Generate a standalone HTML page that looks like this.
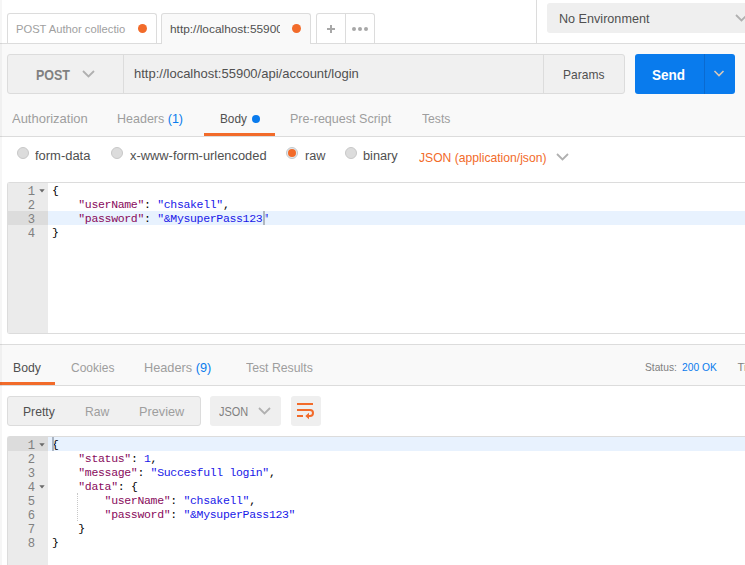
<!DOCTYPE html>
<html><head><meta charset="utf-8"><style>
html,body{margin:0;padding:0;width:745px;height:565px;overflow:hidden;background:#fff;}
body{position:relative;font-family:"Liberation Sans", sans-serif;}
.t{position:absolute;white-space:nowrap;}
.r{position:absolute;}
</style></head><body>
<div class="r" style="left:0px;top:0px;width:745px;height:43px;background:#ffffff;"></div>
<div class="r" style="left:0px;top:43px;width:745px;height:1px;background:#dcdcdc;"></div>
<div class="r" style="left:0px;top:44px;width:745px;height:93px;background:#f9f9f9;"></div>
<div class="r" style="left:7px;top:13px;width:150px;height:30px;background:#ffffff;border:1px solid #dcdcdc;box-sizing:border-box;border-radius:3px;border-bottom:none;border-bottom-left-radius:0;border-bottom-right-radius:0;"></div>
<div class="t" style="left:16.2px;top:19.19px;font-size:11px;line-height:20px;color:#a0a0a0;font-weight:400;transform:scaleX(1.017);transform-origin:0 0;">POST Author collectio</div>
<div class="r" style="left:137.5px;top:24px;width:9px;height:9px;background:#f26b2a;border-radius:5px;"></div>
<div class="r" style="left:161px;top:13px;width:150px;height:31px;background:#f9f9f9;border:1px solid #dcdcdc;box-sizing:border-box;border-radius:3px;border-bottom:none;border-bottom-left-radius:0;border-bottom-right-radius:0;"></div>
<div class="r" style="left:165px;top:18px;width:115px;height:20px;overflow:hidden"><div class="t" style="left:5.3px;top:1.19px;font-size:11px;line-height:20px;color:#505050;font-weight:400;transform:scaleX(1.08);transform-origin:0 0;">http://localhost:55900</div>
</div>
<div class="r" style="left:291.5px;top:24px;width:9px;height:9px;background:#f26b2a;border-radius:5px;"></div>
<div class="r" style="left:316px;top:13px;width:59px;height:30px;background:#ffffff;border:1px solid #dcdcdc;box-sizing:border-box;border-radius:3px;border-bottom:none;border-bottom-left-radius:0;border-bottom-right-radius:0;"></div>
<div class="r" style="left:345px;top:14px;width:1px;height:29px;background:#dcdcdc;"></div>
<div class="r" style="left:327px;top:28px;width:8px;height:2px;background:#a8a8a8;"></div>
<div class="r" style="left:330px;top:25px;width:2px;height:8px;background:#a8a8a8;"></div>
<div class="r" style="left:352px;top:27px;width:4px;height:4px;background:#a8a8a8;border-radius:2px;"></div>
<div class="r" style="left:358px;top:27px;width:4px;height:4px;background:#a8a8a8;border-radius:2px;"></div>
<div class="r" style="left:364px;top:27px;width:4px;height:4px;background:#a8a8a8;border-radius:2px;"></div>
<div class="r" style="left:536px;top:0px;width:1px;height:43px;background:#dcdcdc;"></div>
<div class="r" style="left:547px;top:3px;width:210px;height:30px;background:#efefef;border-radius:3px;"></div>
<div class="t" style="left:558.8px;top:9.00px;font-size:13px;line-height:20px;color:#505050;font-weight:400;transform:scaleX(0.97);transform-origin:0 0;">No Environment</div>
<svg class="r" style="left:735px;top:14px" width="13" height="8"><path d="M1 1 L6.5 6.5 L12 1" stroke="#b0b0b0" stroke-width="1.8" fill="none"/></svg>
<div class="r" style="left:7px;top:54px;width:618px;height:40px;background:#f0f0f0;border:1px solid #dcdcdc;box-sizing:border-box;border-radius:3px;"></div>
<div class="r" style="left:123px;top:55px;width:1px;height:38px;background:#dcdcdc;"></div>
<div class="r" style="left:543px;top:55px;width:1px;height:38px;background:#dcdcdc;"></div>
<div class="t" style="left:36.2px;top:64.95px;font-size:14px;line-height:20px;color:#808080;font-weight:700;transform:scaleX(0.8909);transform-origin:0 0;">POST</div>
<svg class="r" style="left:82px;top:70px" width="13" height="8"><path d="M1 1 L6.5 6.5 L12 1" stroke="#b0b0b0" stroke-width="1.8" fill="none"/></svg>
<div class="t" style="left:134.4px;top:63.60px;font-size:13px;line-height:20px;color:#505050;font-weight:400;transform:scaleX(1.0001);transform-origin:0 0;">http://localhost:55900/api/account/login</div>
<div class="t" style="left:563.4px;top:64.50px;font-size:13px;line-height:20px;color:#505050;font-weight:400;transform:scaleX(0.9251);transform-origin:0 0;">Params</div>
<div class="r" style="left:635px;top:54px;width:100px;height:40px;background:#097bed;border-radius:3px;"></div>
<div class="r" style="left:704px;top:54px;width:1px;height:40px;background:#0a6ad0;"></div>
<div class="t" style="left:652.2px;top:64.80px;font-size:15px;line-height:20px;color:#ffffff;font-weight:700;transform:scaleX(0.9009);transform-origin:0 0;">Send</div>
<svg class="r" style="left:713px;top:70px" width="12" height="8"><path d="M1.5 1 L6 5.5 L10.5 1" stroke="#d8c8b8" stroke-width="1.6" fill="none"/></svg>
<div class="r" style="left:0px;top:94px;width:745px;height:42px;background:#f9f9f9;"></div>
<div class="r" style="left:0px;top:136px;width:745px;height:1px;background:#dcdcdc;"></div>
<div class="t" style="left:12.0px;top:109.30px;font-size:13px;line-height:20px;color:#9e9e9e;font-weight:400;transform:scaleX(0.9976);transform-origin:0 0;">Authorization</div>
<div class="t" style="left:117.0px;top:109.30px;font-size:13px;line-height:20px;color:#9e9e9e;font-weight:400;transform:scaleX(0.9615);transform-origin:0 0;">Headers <span style='color:#097bed'>(1)</span></div>
<div class="t" style="left:219.8px;top:109.30px;font-size:13px;line-height:20px;color:#505050;font-weight:400;transform:scaleX(0.9071);transform-origin:0 0;">Body</div>
<div class="r" style="left:252px;top:115px;width:8px;height:8px;background:#097bed;border-radius:4px;"></div>
<div class="r" style="left:204px;top:133px;width:71px;height:3px;background:#f26b2a;"></div>
<div class="t" style="left:289.8px;top:109.30px;font-size:13px;line-height:20px;color:#9e9e9e;font-weight:400;transform:scaleX(0.9652);transform-origin:0 0;">Pre-request Script</div>
<div class="t" style="left:421.6px;top:109.30px;font-size:13px;line-height:20px;color:#9e9e9e;font-weight:400;transform:scaleX(0.9351);transform-origin:0 0;">Tests</div>
<div class="r" style="left:0px;top:137px;width:745px;height:45px;background:#ffffff;"></div>
<div class="r" style="left:17px;top:147px;width:12px;height:12px;background:#dcdcdc;border:1px solid #c8c8c8;box-sizing:border-box;border-radius:6px;"></div>
<div class="t" style="left:35.0px;top:146.14px;font-size:12px;line-height:20px;color:#505050;font-weight:400;transform:scaleX(1.0791);transform-origin:0 0;">form-data</div>
<div class="r" style="left:111px;top:147px;width:12px;height:12px;background:#dcdcdc;border:1px solid #c8c8c8;box-sizing:border-box;border-radius:6px;"></div>
<div class="t" style="left:129.5px;top:146.14px;font-size:12px;line-height:20px;color:#505050;font-weight:400;transform:scaleX(1.0722);transform-origin:0 0;">x-www-form-urlencoded</div>
<div class="r" style="left:286px;top:147px;width:12px;height:12px;background:#e4eaee;border:1px solid #c4c8ca;box-sizing:border-box;border-radius:6px;"></div>
<div class="r" style="left:288px;top:149px;width:8px;height:8px;background:#f26b2a;border-radius:4px;"></div>
<div class="t" style="left:304.5px;top:146.14px;font-size:12px;line-height:20px;color:#505050;font-weight:400;transform:scaleX(1.0565);transform-origin:0 0;">raw</div>
<div class="r" style="left:345px;top:147px;width:12px;height:12px;background:#dcdcdc;border:1px solid #c8c8c8;box-sizing:border-box;border-radius:6px;"></div>
<div class="t" style="left:363.0px;top:146.14px;font-size:12px;line-height:20px;color:#505050;font-weight:400;transform:scaleX(1.0633);transform-origin:0 0;">binary</div>
<div class="t" style="left:418.5px;top:147.50px;font-size:13px;line-height:20px;color:#f26b2a;font-weight:400;transform:scaleX(0.9334);transform-origin:0 0;">JSON (application/json)</div>
<svg class="r" style="left:556px;top:153px" width="13" height="8"><path d="M1 1 L6.5 6.5 L12 1" stroke="#b0b0b0" stroke-width="1.8" fill="none"/></svg>
<div class="r" style="left:7px;top:182px;width:738px;height:152px;background:#ffffff;border:1px solid #dcdcdc;box-sizing:border-box;border-radius:3px;border-right:none;border-top-right-radius:0;border-bottom-right-radius:0;"></div>
<div class="r" style="left:8px;top:183px;width:40px;height:150px;background:#ebebeb;"></div>
<div class="r" style="left:8px;top:211px;width:40px;height:14px;background:#dcdcdc;"></div>
<div class="r" style="left:48px;top:211px;width:697px;height:14px;background:#e8f2fe;"></div>
<div class="t" style="left:8px;width:27px;text-align:right;top:184.9px;font:12.2px/14px 'Liberation Mono', monospace;color:#808080">1</div>
<svg class="r" style="left:39px;top:188.5px" width="6" height="4"><path d="M0.3 0.3 L5.7 0.3 L3 3.6 Z" fill="#6a6a6a"/></svg>
<div class="t" style="left:52px;top:183.6px;font:11.5px/14px 'Liberation Mono', monospace;letter-spacing:-0.33px;color:#000000;white-space:pre">{</div>
<div class="t" style="left:8px;width:27px;text-align:right;top:198.9px;font:12.2px/14px 'Liberation Mono', monospace;color:#808080">2</div>
<div class="t" style="left:52px;top:197.6px;font:11.5px/14px 'Liberation Mono', monospace;letter-spacing:-0.33px;color:#000000;white-space:pre">    <span style="color:#880a5c">"userName"</span>: <span style="color:#1818e8">"chsakell"</span>,</div>
<div class="t" style="left:8px;width:27px;text-align:right;top:212.9px;font:12.2px/14px 'Liberation Mono', monospace;color:#808080">3</div>
<div class="t" style="left:52px;top:211.6px;font:11.5px/14px 'Liberation Mono', monospace;letter-spacing:-0.33px;color:#000000;white-space:pre">    <span style="color:#880a5c">"password"</span>: <span style="color:#1818e8">"&amp;MysuperPass123"</span></div>
<div class="t" style="left:8px;width:27px;text-align:right;top:226.9px;font:12.2px/14px 'Liberation Mono', monospace;color:#808080">4</div>
<div class="t" style="left:52px;top:225.6px;font:11.5px/14px 'Liberation Mono', monospace;letter-spacing:-0.33px;color:#000000;white-space:pre">}</div>
<div class="r" style="left:263px;top:211px;width:2px;height:14px;background:#b0b6c0;"></div>
<div class="r" style="left:0px;top:334px;width:745px;height:10px;background:#ffffff;"></div>
<div class="r" style="left:0px;top:344px;width:745px;height:1px;background:#dcdcdc;"></div>
<div class="r" style="left:0px;top:345px;width:745px;height:40px;background:#f9f9f9;"></div>
<div class="r" style="left:0px;top:385px;width:745px;height:1px;background:#dcdcdc;"></div>
<div class="r" style="left:0px;top:382px;width:55px;height:3px;background:#f26b2a;"></div>
<div class="t" style="left:12.5px;top:357.60px;font-size:13px;line-height:20px;color:#505050;font-weight:400;transform:scaleX(0.9405);transform-origin:0 0;">Body</div>
<div class="t" style="left:71.10000000000001px;top:357.60px;font-size:13px;line-height:20px;color:#9e9e9e;font-weight:400;transform:scaleX(0.9239);transform-origin:0 0;">Cookies</div>
<div class="t" style="left:144.1px;top:357.60px;font-size:13px;line-height:20px;color:#9e9e9e;font-weight:400;transform:scaleX(0.9796);transform-origin:0 0;">Headers <span style='color:#097bed'>(9)</span></div>
<div class="t" style="left:245.5px;top:357.60px;font-size:13px;line-height:20px;color:#9e9e9e;font-weight:400;transform:scaleX(0.9442);transform-origin:0 0;">Test Results</div>
<div class="t" style="left:645.0px;top:357.29px;font-size:11px;line-height:20px;color:#808080;font-weight:400;transform:scaleX(0.9305);transform-origin:0 0;">Status:</div>
<div class="t" style="left:682.0px;top:357.29px;font-size:11px;line-height:20px;color:#097bed;font-weight:400;transform:scaleX(0.9322);transform-origin:0 0;">200 OK</div>
<div class="t" style="left:737.6px;top:357.29px;font-size:11px;line-height:20px;color:#808080;font-weight:400;">Ti</div>
<div class="r" style="left:0px;top:386px;width:745px;height:179px;background:#ffffff;"></div>
<div class="r" style="left:7px;top:396px;width:194px;height:30px;background:#f0f0f0;border:1px solid #dcdcdc;box-sizing:border-box;border-radius:3px;"></div>
<div class="t" style="left:23.2px;top:401.50px;font-size:13px;line-height:20px;color:#505050;font-weight:400;transform:scaleX(0.9368);transform-origin:0 0;">Pretty</div>
<div class="t" style="left:85.2px;top:401.50px;font-size:13px;line-height:20px;color:#9e9e9e;font-weight:400;transform:scaleX(0.9336);transform-origin:0 0;">Raw</div>
<div class="t" style="left:139.0px;top:401.50px;font-size:13px;line-height:20px;color:#9e9e9e;font-weight:400;transform:scaleX(0.9778);transform-origin:0 0;">Preview</div>
<div class="r" style="left:210px;top:396px;width:71px;height:30px;background:#efefef;border-radius:3px;"></div>
<div class="t" style="left:219.0px;top:401.50px;font-size:13px;line-height:20px;color:#808080;font-weight:400;transform:scaleX(0.8424);transform-origin:0 0;">JSON</div>
<svg class="r" style="left:258px;top:407px" width="13" height="8"><path d="M1 1 L6.5 6.5 L12 1" stroke="#b0b0b0" stroke-width="1.8" fill="none"/></svg>
<div class="r" style="left:291px;top:396px;width:30px;height:30px;background:#efefef;border-radius:3px;"></div>
<svg class="r" style="left:291px;top:396px" width="30" height="30"><g stroke="#f26b2a" stroke-width="2" fill="none"><path d="M6 8 H22"/><path d="M6 14 H19 a3 3 0 0 1 0 6 H17"/><path d="M6 20 H12"/></g><path d="M14.3 20 L18 16.8 L18 23.2 Z" fill="#f26b2a"/></svg>
<div class="r" style="left:7px;top:436px;width:738px;height:129px;background:#ffffff;border:1px solid #dcdcdc;box-sizing:border-box;border-radius:3px;border-right:none;border-bottom:none;border-top-right-radius:0;border-bottom-left-radius:0;"></div>
<div class="r" style="left:8px;top:437px;width:40px;height:128px;background:#ebebeb;"></div>
<div class="r" style="left:8px;top:437px;width:40px;height:14px;background:#dcdcdc;"></div>
<div class="r" style="left:48px;top:437px;width:697px;height:14px;background:#e8f2fe;"></div>
<div class="t" style="left:8px;width:27px;text-align:right;top:438.9px;font:12.2px/14px 'Liberation Mono', monospace;color:#808080">1</div>
<svg class="r" style="left:39px;top:442.5px" width="6" height="4"><path d="M0.3 0.3 L5.7 0.3 L3 3.6 Z" fill="#6a6a6a"/></svg>
<div class="t" style="left:52px;top:437.6px;font:11.5px/14px 'Liberation Mono', monospace;letter-spacing:-0.33px;color:#000000;white-space:pre">{</div>
<div class="t" style="left:8px;width:27px;text-align:right;top:452.9px;font:12.2px/14px 'Liberation Mono', monospace;color:#808080">2</div>
<div class="t" style="left:52px;top:451.6px;font:11.5px/14px 'Liberation Mono', monospace;letter-spacing:-0.33px;color:#000000;white-space:pre">    <span style="color:#880a5c">"status"</span>: <span style="color:#1818e8">1</span>,</div>
<div class="t" style="left:8px;width:27px;text-align:right;top:466.9px;font:12.2px/14px 'Liberation Mono', monospace;color:#808080">3</div>
<div class="t" style="left:52px;top:465.6px;font:11.5px/14px 'Liberation Mono', monospace;letter-spacing:-0.33px;color:#000000;white-space:pre">    <span style="color:#880a5c">"message"</span>: <span style="color:#1818e8">"Succesfull login"</span>,</div>
<div class="t" style="left:8px;width:27px;text-align:right;top:480.9px;font:12.2px/14px 'Liberation Mono', monospace;color:#808080">4</div>
<svg class="r" style="left:39px;top:484.5px" width="6" height="4"><path d="M0.3 0.3 L5.7 0.3 L3 3.6 Z" fill="#6a6a6a"/></svg>
<div class="t" style="left:52px;top:479.6px;font:11.5px/14px 'Liberation Mono', monospace;letter-spacing:-0.33px;color:#000000;white-space:pre">    <span style="color:#880a5c">"data"</span>: {</div>
<div class="t" style="left:8px;width:27px;text-align:right;top:494.9px;font:12.2px/14px 'Liberation Mono', monospace;color:#808080">5</div>
<div class="t" style="left:52px;top:493.6px;font:11.5px/14px 'Liberation Mono', monospace;letter-spacing:-0.33px;color:#000000;white-space:pre">        <span style="color:#880a5c">"userName"</span>: <span style="color:#1818e8">"chsakell"</span>,</div>
<div class="t" style="left:8px;width:27px;text-align:right;top:508.9px;font:12.2px/14px 'Liberation Mono', monospace;color:#808080">6</div>
<div class="t" style="left:52px;top:507.6px;font:11.5px/14px 'Liberation Mono', monospace;letter-spacing:-0.33px;color:#000000;white-space:pre">        <span style="color:#880a5c">"password"</span>: <span style="color:#1818e8">"&amp;MysuperPass123"</span></div>
<div class="t" style="left:8px;width:27px;text-align:right;top:522.9px;font:12.2px/14px 'Liberation Mono', monospace;color:#808080">7</div>
<div class="t" style="left:52px;top:521.6px;font:11.5px/14px 'Liberation Mono', monospace;letter-spacing:-0.33px;color:#000000;white-space:pre">    }</div>
<div class="t" style="left:8px;width:27px;text-align:right;top:536.9px;font:12.2px/14px 'Liberation Mono', monospace;color:#808080">8</div>
<div class="t" style="left:52px;top:535.6px;font:11.5px/14px 'Liberation Mono', monospace;letter-spacing:-0.33px;color:#000000;white-space:pre">}</div>
<div class="r" style="left:52px;top:437px;width:2px;height:14px;background:#aab4c2;"></div>
<div class="r" style="left:77px;top:493px;width:0px;height:28px;border-left:1px dotted #c8c8c8;"></div>
<div class="r" style="left:0px;top:0px;width:2px;height:565px;background:rgba(0,0,0,0.035);"></div>
</body></html>
